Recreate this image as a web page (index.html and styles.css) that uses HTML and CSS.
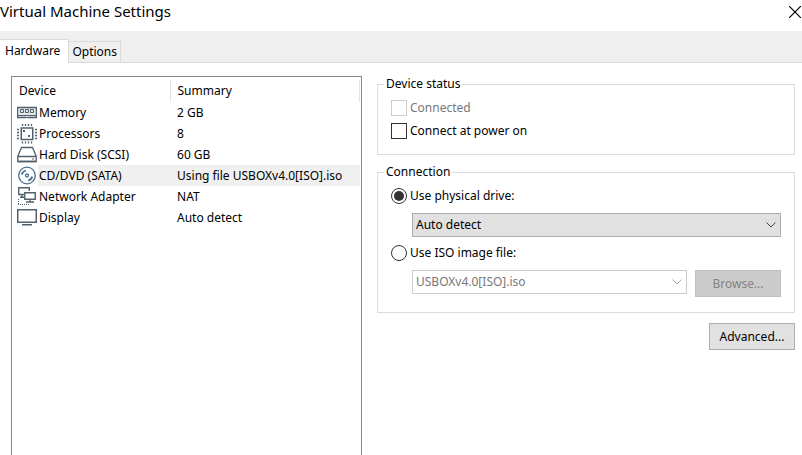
FILE: index.html
```html
<!DOCTYPE html>
<html lang="en">
<head>
<meta charset="utf-8">
<meta name="viewport" content="width=device-width, initial-scale=1">
<title>Virtual Machine Settings</title>
<link rel="stylesheet" href="styles.css">
</head>
<body>
<header class="titlebar">
  <h1 class="title">Virtual Machine Settings</h1>
  <button class="close" type="button" aria-label="Close">
    <svg width="12" height="12" viewBox="0 0 12 12" fill="none" stroke="#000" stroke-width="1.2"><path d="M0 0L12 12M12 0L0 12"/></svg>
  </button>
</header>
<nav class="tabs">
  <button class="tab tab-active" type="button">Hardware</button>
  <button class="tab" type="button">Options</button>
</nav>
<main class="content">
  <section class="device-list">
    <table class="devices">
      <colgroup><col class="col-icon"><col class="col-name"><col></colgroup>
      <thead>
        <tr><th colspan="2">Device</th><th class="summary">Summary</th></tr>
      </thead>
      <tbody>
        <tr>
          <td><svg class="icon" viewBox="0 0 20 20" fill="none" stroke="#52616d"><path d="M.5 4.500h19v10H.5z" fill="#e4e9ec"/><path d="M.5 4v11M19.500 4v11M0 4.500h20" stroke-width="1.500"/><path d="M3.500 6.500h3v3h-3zM8.500 6.500h3v3h-3zM13.500 6.500h3v3h-3z"/><path d="M1 12.500h18"/><path d="M0 14.500h9M11 14.500h9" stroke-width="1.500"/></svg></td>
          <td>Memory</td><td>2 GB</td>
        </tr>
        <tr>
          <td><svg class="icon" viewBox="0 0 20 20" fill="none" stroke="#52616d"><path d="M4.250 4h11.500v11.500H4.250z" stroke-width="1.500"/><path d="M5.500 0v2M8.500 0v2M11.500 0v2M14.500 0v2M5.500 17.500v2M8.500 17.500v2M11.500 17.500v2M14.500 17.500v2M0 5.500h2M0 8.500h2M0 11.500h2M0 14.500h2M18 5.500h2M18 8.500h2M18 11.500h2M18 14.500h2" stroke-width="1.300"/><path d="M6 7h2M11 12h2" stroke-width="2"/></svg></td>
          <td>Processors</td><td>8</td>
        </tr>
        <tr>
          <td><svg class="icon" viewBox="0 0 20 20" fill="none" stroke="#52616d"><path d="M4.500 2.500h11l3.750 9v5H.75v-5z" stroke-width="1.300"/><path d="M1 11.500h18M1 16.500h18" stroke-width="1.300"/><path d="M15 14h2"/></svg></td>
          <td>Hard Disk (SCSI)</td><td>60 GB</td>
        </tr>
        <tr class="selected">
          <td><svg class="icon" viewBox="0 0 20 20" fill="none" stroke="#4a6f90"><circle cx="10" cy="9.500" r="8.300" stroke-width="1.300"/><circle cx="10" cy="9.500" r="1.500" stroke-width="1.300"/><path d="M4.800 8.500a5.500 5.500 0 0 1 4-4M15.200 10.500a5.500 5.500 0 0 1-4 4" stroke-width="1.800"/></svg></td>
          <td>CD/DVD (SATA)</td><td>Using file USBOXv4.0[ISO].iso</td>
        </tr>
        <tr>
          <td><svg class="icon" viewBox="0 0 20 20" fill="none" stroke="#52616d"><path d="M7 7.500H1.750V.75h10.500V4" stroke-width="1.400"/><path d="M7.750 5.750h10.500v6.500H7.750z" fill="#fff" stroke-width="1.400"/><path d="M5 8v2M3 10.250h4M13 13v2M9 15h8" stroke-width="1.300"/><path d="M1.500 12v5M1 17.500h12" stroke-dasharray="1 1"/></svg></td>
          <td>Network Adapter</td><td>NAT</td>
        </tr>
        <tr>
          <td><svg class="icon" viewBox="0 0 20 20" fill="none" stroke="#52616d" stroke-width="1.500"><path d="M.75 1.750h18.500v12.500H.75z"/><path d="M5 16.750h10"/></svg></td>
          <td>Display</td><td>Auto detect</td>
        </tr>
      </tbody>
    </table>
  </section>
  <form class="panel">
    <fieldset class="group status">
      <legend>Device status</legend>
      <label class="option disabled"><input type="checkbox" disabled>Connected</label>
      <label class="option"><input type="checkbox">Connect at power on</label>
    </fieldset>
    <fieldset class="group connection">
      <legend>Connection</legend>
      <label class="option"><input type="radio" name="source" checked>Use physical drive:</label>
      <div class="field">
        <span class="combo">
          <select aria-label="Physical drive"><option>Auto detect</option></select>
          <svg class="chevron" viewBox="0 0 10 6" fill="none" stroke="#444"><path d="M.5.5L5 5 9.500.5"/></svg>
        </span>
      </div>
      <label class="option"><input type="radio" name="source">Use ISO image file:</label>
      <div class="field">
        <span class="combo">
          <select aria-label="ISO image file" disabled><option>USBOXv4.0[ISO].iso</option></select>
          <svg class="chevron" viewBox="0 0 10 6" fill="none" stroke="#aaa"><path d="M.5.5L5 5 9.500.5"/></svg>
        </span>
        <button class="btn" type="button" disabled>Browse...</button>
      </div>
    </fieldset>
    <button class="btn advanced" type="button">Advanced...</button>
  </form>
</main>
</body>
</html>
```
FILE: styles.css
```css
* { box-sizing: border-box; }
body {
  margin: 0;
  height: 100vh;
  overflow: hidden;
  display: flex;
  flex-direction: column;
  background: #fff;
  color: #000;
  font: 12px/16px "Noto Sans", sans-serif;
}
button, select, input { font: inherit; color: inherit; margin: 0; }
.titlebar {
  display: flex;
  justify-content: space-between;
  align-items: flex-start;
  height: 31px;
  flex: none;
}
.title { margin: 0; font-weight: 400; font-size: 15px; line-height: 22px; }
.close { border: 0; background: none; padding: 6px 1px; display: flex; }
.tabs {
  display: flex;
  align-items: flex-end;
  flex: none;
  height: 32px;
  background: #efefef;
  box-shadow: inset 0 -1px #d9d9d9;
}
.tab {
  height: 22px;
  padding: 0 3px;
  border: 1px solid #d9d9d9;
  border-left: 0;
  background: #f0f0f0;
}
.tab-active {
  height: 24px;
  padding: 0 8px 2px 5px;
  border-bottom: 0;
  background: #fff;
}
.content {
  flex: 1;
  min-height: 0;
  display: grid;
  grid-template-columns: 351fr 418fr;
  gap: 15px;
  padding: 13px 7px 0 11px;
}
.device-list {
  border: 1px solid #828790;
  border-bottom: 0;
  padding: 3px 1px 0 5px;
}
.devices { width: 100%; border-collapse: collapse; table-layout: fixed; }
.col-icon { width: 21px; }
.col-name { width: 132px; }
.devices th { height: 22px; padding: 0 2px; text-align: left; font-weight: 400; }
.devices .summary {
  padding-left: 7px;
  border-left: 1px solid #e5e5e5;
  border-right: 1px solid #e5e5e5;
}
.devices td { height: 21px; padding: 0; white-space: nowrap; }
.devices td + td { padding-left: 1px; }
.devices td + td + td { padding-left: 7px; }
.selected td + td { background: #f0f0f0; }
.icon { display: block; width: 20px; height: 20px; }
.panel { display: flex; flex-direction: column; align-items: stretch; }
.group {
  margin: 0;
  padding: 8px 13px 0;
  min-width: 0;
  border: 1px solid #dcdcdc;
}
.group legend { padding: 0 2px; margin-left: -7px; }
.status { height: 79px; display: flex; flex-direction: column; gap: 7px; }
.connection { height: 149px; margin-top: 9px; }
.option { display: flex; align-items: center; gap: 3px; height: 16px; }
.disabled { color: #787878; }
.option input {
  appearance: none;
  width: 16px;
  height: 16px;
  border: 1px solid #333;
  background: #fff;
}
.option input:disabled { border-color: #ccc; }
.option input[type="radio"] { border-radius: 50%; }
.option input[type="radio"]:checked {
  background: #333;
  background-clip: content-box;
  padding: 2px;
}
.field { display: flex; gap: 8px; margin: 9px 0 8px 21px; }
.combo { flex: 1; display: grid; align-items: center; height: 24px; }
.combo > * { grid-area: 1 / 1; }
.combo select {
  appearance: none;
  width: 100%;
  height: 24px;
  padding: 0 24px 0 3px;
  border: 1px solid #adadad;
  border-radius: 0;
  background: #e1e1e1;
}
.combo select:disabled {
  border-color: #ccc;
  background: #fff;
  color: #787878;
  opacity: 1;
}
.chevron { justify-self: end; width: 10px; height: 6px; margin-right: 5px; pointer-events: none; }
.btn {
  width: 86px;
  height: 27px;
  padding: 0;
  border: 1px solid #adadad;
  background: #e1e1e1;
}
.btn:disabled { border-color: #bfbfbf; background: #ccc; color: #838383; }
.advanced { align-self: flex-end; margin-top: 10px; }
```
